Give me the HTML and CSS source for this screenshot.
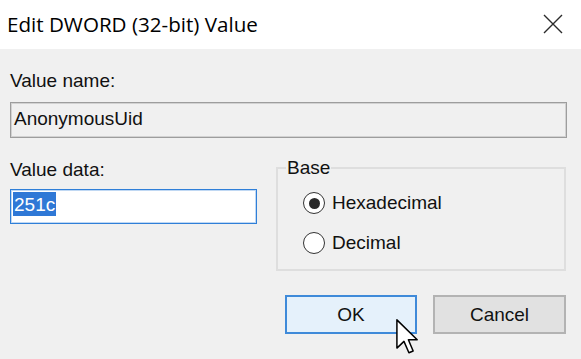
FILE: index.html
```html
<!DOCTYPE html>
<html>
<head>
<meta charset="utf-8">
<title>Edit DWORD (32-bit) Value</title>
<link rel="stylesheet" href="styles.css">
</head>
<body>
<div class="dialog">
  <div class="titlebar">
    <span class="title">Edit DWORD (32-bit) Value</span>
    <svg class="close" width="20" height="20" viewBox="0 0 20 20"><path d="M1 1 L19 19 M19 1 L1 19" stroke="#2b2b2b" stroke-width="1.4" fill="none"/></svg>
  </div>
  <div class="content">
    <div class="label">Value name:</div>
    <div class="namebox">AnonymousUid</div>
    <div class="row">
      <div class="leftcol">
        <div class="label">Value data:</div>
        <div class="databox"><span class="sel">251c</span></div>
      </div>
      <fieldset class="group">
        <legend class="legend">Base</legend>
        <div class="radio-row"><span class="radio checked"></span><span class="rtext">Hexadecimal</span></div>
        <div class="radio-row"><span class="radio"></span><span class="rtext">Decimal</span></div>
      </fieldset>
    </div>
    <div class="buttons">
      <div class="btn ok">OK</div>
      <div class="btn cancel">Cancel</div>
    </div>
  </div>
  <svg class="cursor" width="23" height="36" viewBox="-0.5 -0.5 13 20.4"><path d="M0 0 L0 16 L4 12.2 L6.8 18.6 L9.2 17.6 L6.5 11.3 L11.5 11.3 Z" fill="#fff" stroke="#000" stroke-width="0.85" stroke-linejoin="round"/></svg>
</div>
</body>
</html>
```
FILE: styles.css
```css
* { box-sizing: border-box; }
html, body { margin: 0; padding: 0; }
body {
  width: 581px;
  height: 359px;
  background: #f0f0f0;
  font-family: "Liberation Sans", Arial, sans-serif;
  font-size: 19px;
  line-height: 22px;
  color: #111;
  overflow: hidden;
}
.dialog { position: relative; width: 581px; height: 359px; }
.titlebar {
  height: 49px;
  background: #fff;
  display: flex;
  justify-content: space-between;
  align-items: flex-start;
  padding: 11px 18px 0 7px;
}
.title {
  font-family: "Open Sans", "Noto Sans", sans-serif;
  font-size: 20.6px;
  line-height: 27px;
  color: #000;
}
.close { margin-top: 3px; }
.content { padding: 21px 15px 0 10px; }
.label { line-height: 22px; }
.namebox {
  margin-top: 10px;
  height: 36px;
  border: 1px solid #9d9d9d;
  box-shadow: inset 0 0 0 1px #d2d2d2;
  padding: 0 3px 2px 3px;
  line-height: 32px;
  margin-right: -1px;
}
.row {
  display: flex;
  align-items: flex-start;
  margin-top: 19px;
}
.leftcol { width: 247px; padding-top: 2px; }
.databox {
  margin-top: 8px;
  height: 35px;
  background: #fff;
  border: 1px solid #2f7fd8;
  box-shadow: inset 0 0 0 1px rgba(47, 127, 216, 0.3);
  padding: 2px 2px;
  display: flex;
  align-items: flex-start;
}
.sel {
  display: inline-block;
  background: #2f78d6;
  color: #fff;
  line-height: 22px;
  height: 24px;
  padding: 2px 1px 0 1px;
}
.group {
  flex: 1;
  margin: 0 0 0 19px;
  border: 2px solid #dedede;
  padding: 4px 0 6px 0;
  min-width: 0;
}
.legend {
  padding: 0 1px;
  margin-left: 8px;
  line-height: 22px;
}
.radio-row {
  height: 40px;
  display: flex;
  align-items: center;
  padding-left: 25px;
}
.radio {
  width: 22px;
  height: 22px;
  border-radius: 50%;
  border: 1.6px solid #333;
  background: #fff;
  margin-right: 7px;
  display: flex;
  align-items: center;
  justify-content: center;
  flex: none;
}
.radio.checked::after {
  content: "";
  width: 11px;
  height: 11px;
  border-radius: 50%;
  background: #2a2a2a;
}
.rtext { line-height: 22px; }
.buttons {
  display: flex;
  justify-content: flex-end;
  gap: 16px;
  margin-top: 24px;
}
.btn {
  height: 39px;
  display: flex;
  align-items: center;
  justify-content: center;
  color: #111;
}
.ok {
  width: 132px;
  background: #e5f1fb;
  border: 2px solid #3f8ad9;
}
.cancel {
  width: 133px;
  background: #e1e1e1;
  border: 2px solid #b3b3b3;
}
.cursor {
  position: absolute;
  left: 396px;
  top: 319px;
}
```
